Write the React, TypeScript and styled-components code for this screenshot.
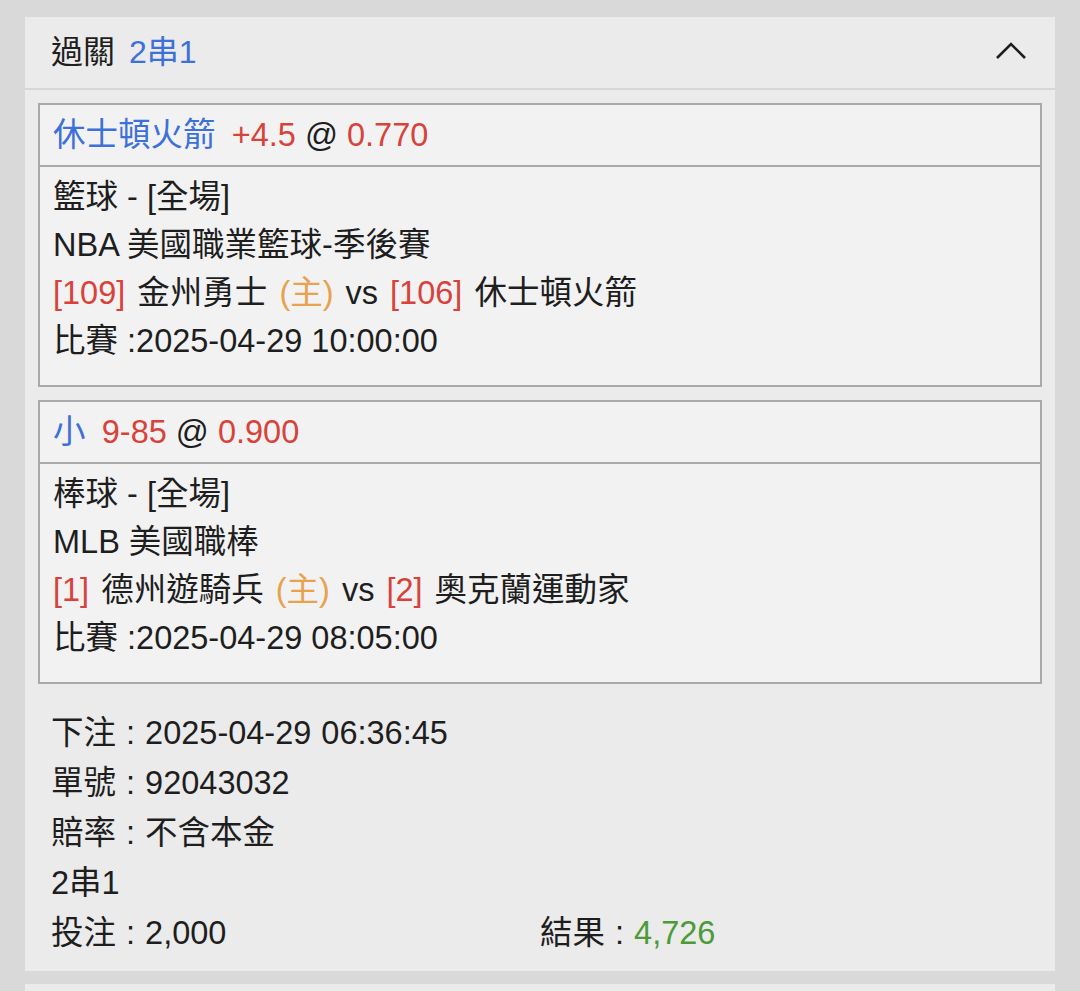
import React from 'react';
import styled, { createGlobalStyle } from 'styled-components';

const GlobalStyle = createGlobalStyle`
  html, body {
    margin: 0;
    padding: 0;
    background: #d9d9d9;
  }
  body {
    font-family: "Liberation Sans", "Noto Sans CJK TC", sans-serif;
    color: #1e1e1e;
  }
`;

const Page = styled.div`
  display: flex;
  flex-direction: column;
  gap: 13px;
  padding: 17px 25px 0;
  height: 991px;
  box-sizing: border-box;
  overflow: hidden;
`;

const Panel = styled.section`
  background: #ebebeb;
  flex-shrink: 0;
`;

const PanelHeader = styled.div`
  display: flex;
  align-items: center;
  justify-content: space-between;
  height: 73px;
  box-sizing: border-box;
  padding: 0 28px 8px 26px;
  font-size: 32px;
  border-bottom: 2px solid #d6d6d6;
`;

const Title = styled.div`
  display: flex;
  gap: 14px;
`;

const PanelBody = styled.div`
  display: flex;
  flex-direction: column;
  gap: 13px;
  padding: 13px 13px 13px;
`;

const Card = styled.div`
  background: #f2f2f2;
  border: 2px solid #a9a9a9;
  font-size: 32.5px;
`;

const CardHead = styled.div`
  height: 62px;
  box-sizing: border-box;
  display: flex;
  align-items: center;
  padding: 0 13px 7px;
  border-bottom: 2px solid #a9a9a9;
`;

const CardBody = styled.div`
  padding: 6px 13px 20px;
  line-height: 48px;
`;

const Line = styled.div<{ $wide?: boolean }>`
  white-space: nowrap;
  word-spacing: ${p => (p.$wide ? '3px' : '0')};
`;

const Tone = styled.span<{ $c: 'blue' | 'red' | 'orange' | 'green' }>`
  color: ${p =>
    p.$c === 'blue' ? '#3d70d8' : p.$c === 'red' ? '#d7433b' : p.$c === 'orange' ? '#e8a14d' : '#4c9a38'};
`;

const Info = styled.div`
  display: grid;
  grid-template-columns: 1fr 1fr;
  padding: 11px 13px 0;
  font-size: 32.5px;
  line-height: 50px;
  word-spacing: 1px;
`;

const InfoRow = styled.div<{ $full?: boolean }>`
  grid-column: ${p => (p.$full ? '1 / span 2' : 'auto')};
  white-space: nowrap;
`;

const ChevronIcon = styled.svg`
  margin-top: 4px;
`;

const Chevron = () => (
  <ChevronIcon width="32" height="20" viewBox="0 0 32 20">
    <polyline points="2,17 16,3 30,17" fill="none" stroke="#1e1e1e" strokeWidth="2.6" />
  </ChevronIcon>
);

type Leg = {
  pick: string;
  line: string;
  odds: string;
  sport: string;
  league: string;
  homeNo: string;
  home: string;
  awayNo: string;
  away: string;
  time: string;
};

const legs: Leg[] = [
  {
    pick: '休士頓火箭',
    line: '+4.5',
    odds: '0.770',
    sport: '籃球 - [全場]',
    league: 'NBA 美國職業籃球-季後賽',
    homeNo: '[109]',
    home: '金州勇士',
    awayNo: '[106]',
    away: '休士頓火箭',
    time: '比賽 :2025-04-29 10:00:00',
  },
  {
    pick: '小',
    line: '9-85',
    odds: '0.900',
    sport: '棒球 - [全場]',
    league: 'MLB 美國職棒',
    homeNo: '[1]',
    home: '德州遊騎兵',
    awayNo: '[2]',
    away: '奧克蘭運動家',
    time: '比賽 :2025-04-29 08:05:00',
  },
];

const LegCard: React.FC<{ leg: Leg }> = ({ leg }) => (
  <Card>
    <CardHead>
      <Line>
        <Tone $c="blue">{leg.pick}</Tone>{'\u2002'}<Tone $c="red">{leg.line}</Tone> @ <Tone $c="red">{leg.odds}</Tone>
      </Line>
    </CardHead>
    <CardBody>
      <Line>{leg.sport}</Line>
      <Line>{leg.league}</Line>
      <Line $wide>
        <Tone $c="red">{leg.homeNo}</Tone> {leg.home} <Tone $c="orange">(主)</Tone> vs{' '}
        <Tone $c="red">{leg.awayNo}</Tone> {leg.away}
      </Line>
      <Line>{leg.time}</Line>
    </CardBody>
  </Card>
);

const App: React.FC = () => (
  <>
    <GlobalStyle />
    <Page>
      <Panel>
        <PanelHeader>
          <Title>
            <span>過關</span>
            <Tone $c="blue">2串1</Tone>
          </Title>
          <Chevron />
        </PanelHeader>
        <PanelBody>
          {legs.map(l => (
            <LegCard key={l.time} leg={l} />
          ))}
          <Info>
            <InfoRow $full>下注 : 2025-04-29 06:36:45</InfoRow>
            <InfoRow $full>單號 : 92043032</InfoRow>
            <InfoRow $full>賠率 : 不含本金</InfoRow>
            <InfoRow $full>2串1</InfoRow>
            <InfoRow>投注 : 2,000</InfoRow>
            <InfoRow>
              結果 : <Tone $c="green">4,726</Tone>
            </InfoRow>
          </Info>
        </PanelBody>
      </Panel>
      <Panel style={{ height: 60 }} />
    </Page>
  </>
);

export default App;
